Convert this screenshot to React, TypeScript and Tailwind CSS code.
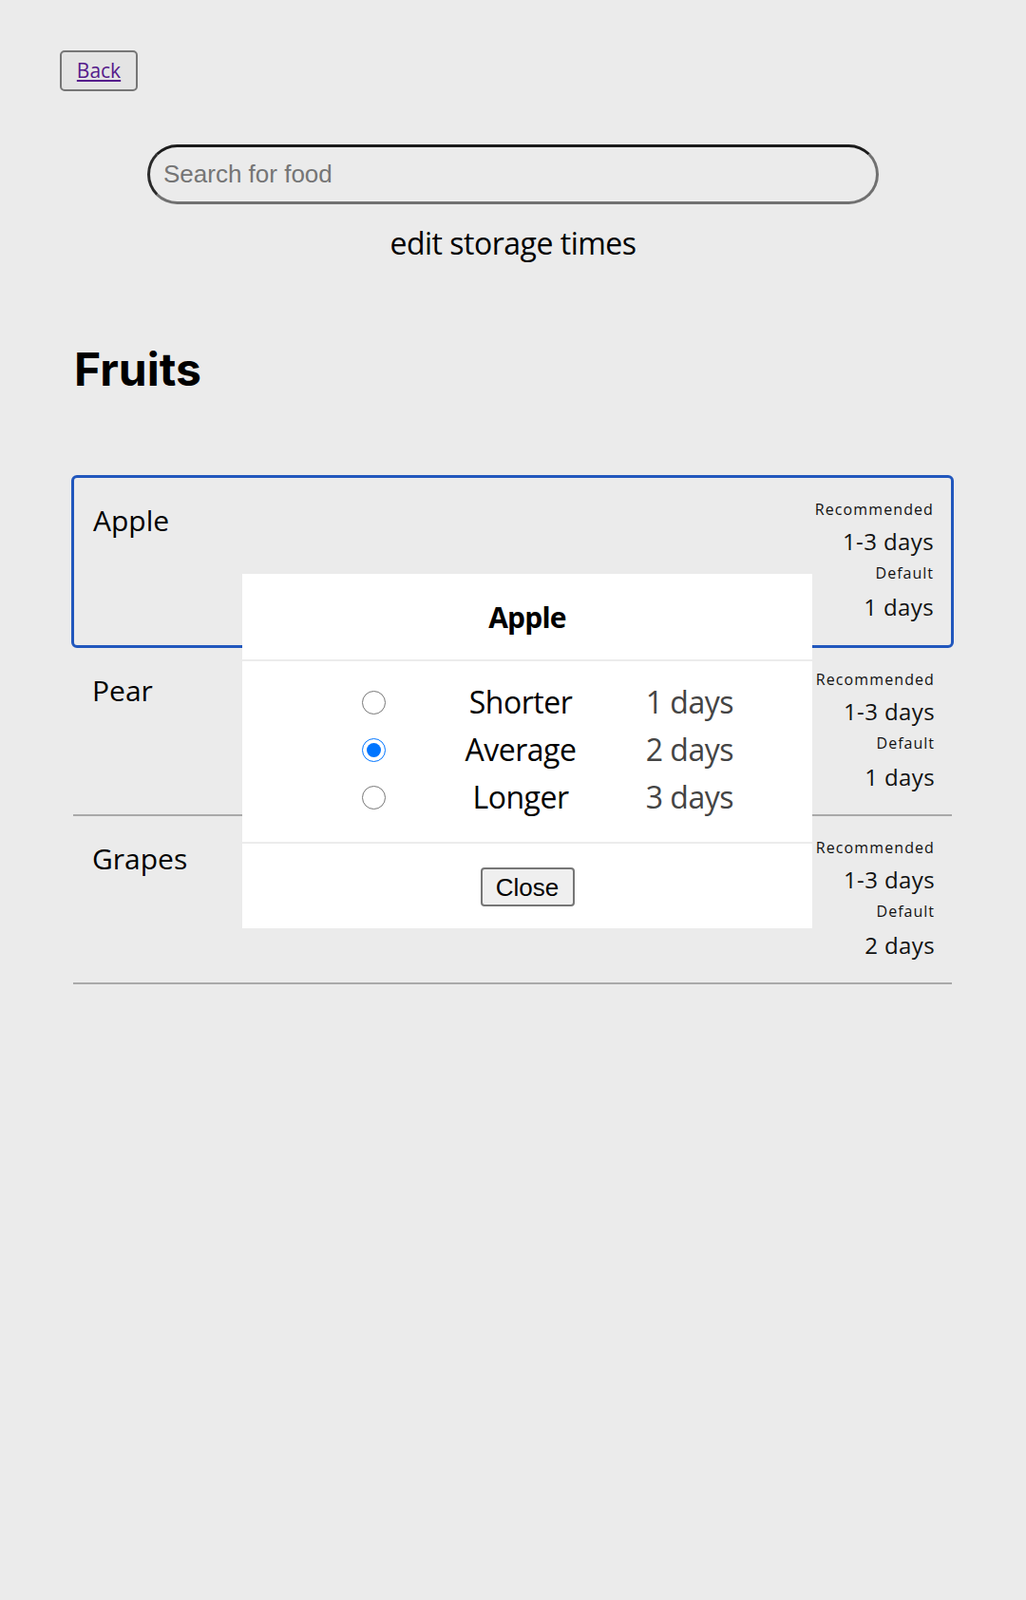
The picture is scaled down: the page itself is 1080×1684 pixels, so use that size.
import React from 'react';

type Food = {
  name: string;
  recommended: string;
  def: string;
  selected?: boolean;
};

const foods: Food[] = [
  { name: 'Apple', recommended: '1-3 days', def: '1 days', selected: true },
  { name: 'Pear', recommended: '1-3 days', def: '1 days' },
  { name: 'Grapes', recommended: '1-3 days', def: '2 days' },
];

const options = [
  { label: 'Shorter', days: '1 days', checked: false },
  { label: 'Average', days: '2 days', checked: true },
  { label: 'Longer', days: '3 days', checked: false },
];

const FoodRow = ({ food }: { food: Food }) => {
  const box = food.selected
    ? 'border-[3px] border-[#2157bd] rounded-[6px] h-[182px]'
    : 'mx-[2px] border-b-2 border-[#a9a9a9] h-[177px]';

  return (
    <div className={`flex justify-between ${box}`}>
      <div className="pl-[20px] pt-[24px] text-[30px] leading-[42px] text-black">{food.name}</div>
      <div className="flex flex-col items-end pr-[18px] pt-[21px] text-[#111]">
        <div className="text-[16px] leading-[24px] tracking-[1.1px]">Recommended</div>
        <div className="text-[24px] leading-[44px] tracking-[0.4px]">{food.recommended}</div>
        <div className="text-[16px] leading-[22px] tracking-[1px]">Default</div>
        <div className="text-[24px] leading-[49px] tracking-[0.4px]">{food.def}</div>
      </div>
    </div>
  );
};

export default function App() {
  return (
    <div className="relative min-h-screen bg-[#ebebeb] font-['Open_Sans',sans-serif] text-black">
      <div className="pl-[63px] pt-[53px]">
        <button className="h-[43px] w-[82px] rounded-[5px] border-2 border-[#767676] bg-[#e4e4e4] text-[21px] text-[#551a8b] underline">
          Back
        </button>
      </div>

      <div className="mt-[56px] flex justify-center">
        <input
          placeholder="Search for food"
          className="h-[63px] w-[770px] rounded-full border-[3px] border-t-[#1b1b1b] border-l-[#2a2a2a] border-b-[#707070] border-r-[#707070] bg-transparent pl-[14px] font-['Liberation_Sans',sans-serif] text-[26px] outline-none placeholder:text-[#757575]"
        />
      </div>

      <div className="mt-[21px] text-center text-[32px] leading-[40px] tracking-[-0.5px]">edit storage times</div>

      <h1 className="mt-[89px] pl-[78px] font-['Inter',sans-serif] text-[48px] font-bold leading-[48px]">Fruits</h1>

      <div className="ml-[75px] mt-[87px] w-[929px]">
        {foods.map((f) => (
          <FoodRow key={f.name} food={f} />
        ))}
      </div>

      <div className="absolute left-[255px] top-[604px] w-[600px] bg-white">
        <div className="flex h-[92px] items-center justify-center border-b-2 border-[#ececec]">
          <span className="text-[30px] font-bold tracking-[-0.8px]">Apple</span>
        </div>
        <div className="border-b-2 border-[#ececec] pb-[22px] pl-[126px] pt-[18px]">
          {options.map((o) => (
            <div key={o.label} className="grid h-[50px] grid-cols-[87px_160px_144px] items-center">
              <input
                type="radio"
                name="storage"
                defaultChecked={o.checked}
                className="m-0 h-[25px] w-[25px]"
              />
              <span className="text-center text-[32px] leading-[50px] tracking-[-0.5px]">{o.label}</span>
              <span className="text-right text-[32px] leading-[50px] tracking-[-0.5px] text-[#444]">{o.days}</span>
            </div>
          ))}
        </div>
        <div className="flex h-[89px] items-center justify-center pt-[2px]">
          <button className="h-[41px] w-[99px] rounded-[4px] border-2 border-[#767676] bg-[#efefef] font-['Liberation_Sans',sans-serif] text-[26px] text-black">
            Close
          </button>
        </div>
      </div>
    </div>
  );
}
